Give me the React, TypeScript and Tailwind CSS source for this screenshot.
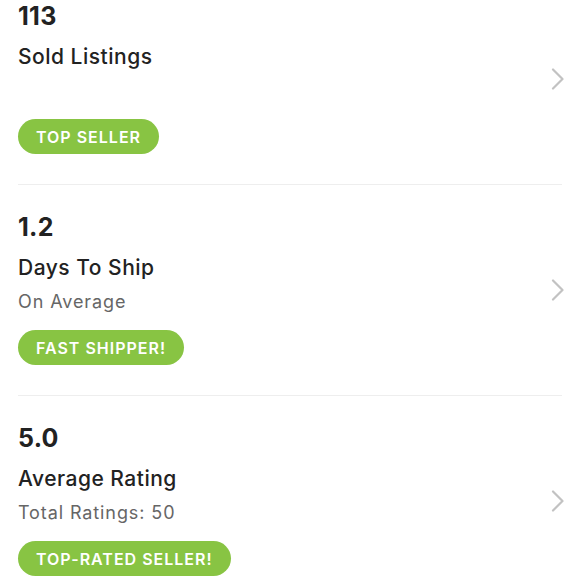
import React from "react";

type Stat = { value: string; title: string; subtitle: string; badge: string };

const stats: Stat[] = [
  { value: "113", title: "Sold Listings", subtitle: "", badge: "TOP SELLER" },
  { value: "1.2", title: "Days To Ship", subtitle: "On Average", badge: "FAST SHIPPER!" },
  { value: "5.0", title: "Average Rating", subtitle: "Total Ratings: 50", badge: "TOP-RATED SELLER!" },
];

function Chevron() {
  return (
    <svg width="14" height="22" viewBox="0 0 14 22" fill="none" className="shrink-0">
      <polyline
        points="2,1.5 11.5,11 2,20.5"
        stroke="#c2c2c2"
        strokeWidth="2.2"
        strokeLinecap="round"
        strokeLinejoin="round"
      />
    </svg>
  );
}

export default function App() {
  return (
    <div
      className="w-[580px] h-[580px] overflow-hidden bg-white text-[#222]"
      style={{ fontFamily: "Inter, 'Liberation Sans', sans-serif" }}
    >
      <div className="-mt-[26px] flex flex-col">
        {stats.map((s, i) => (
          <div key={i} className="flex flex-col">
            <div className="flex items-center pl-[18px] pr-[15px]">
              <div className="flex flex-1 flex-col items-start pt-[27px] pb-[30px]">
                <div className="text-[25px] leading-[30px] font-bold tracking-[0.3px]">{s.value}</div>
                <div className="mt-[13px] text-[21px] leading-[26px] font-medium tracking-[0.5px]">{s.title}</div>
                <div className="mt-[10px] h-[22px] text-[18px] leading-[22px] tracking-[0.9px] text-[#666]">{s.subtitle}</div>
                <div className="mt-[17px] flex h-[35px] items-center rounded-full bg-[#88c443] px-[18px] text-[16px] font-semibold tracking-[1px] text-white">
                  {s.badge}
                </div>
              </div>
              <Chevron />
            </div>
            <div className="mx-[18px] h-px bg-[#eeeeee]" />
          </div>
        ))}
      </div>
    </div>
  );
}
